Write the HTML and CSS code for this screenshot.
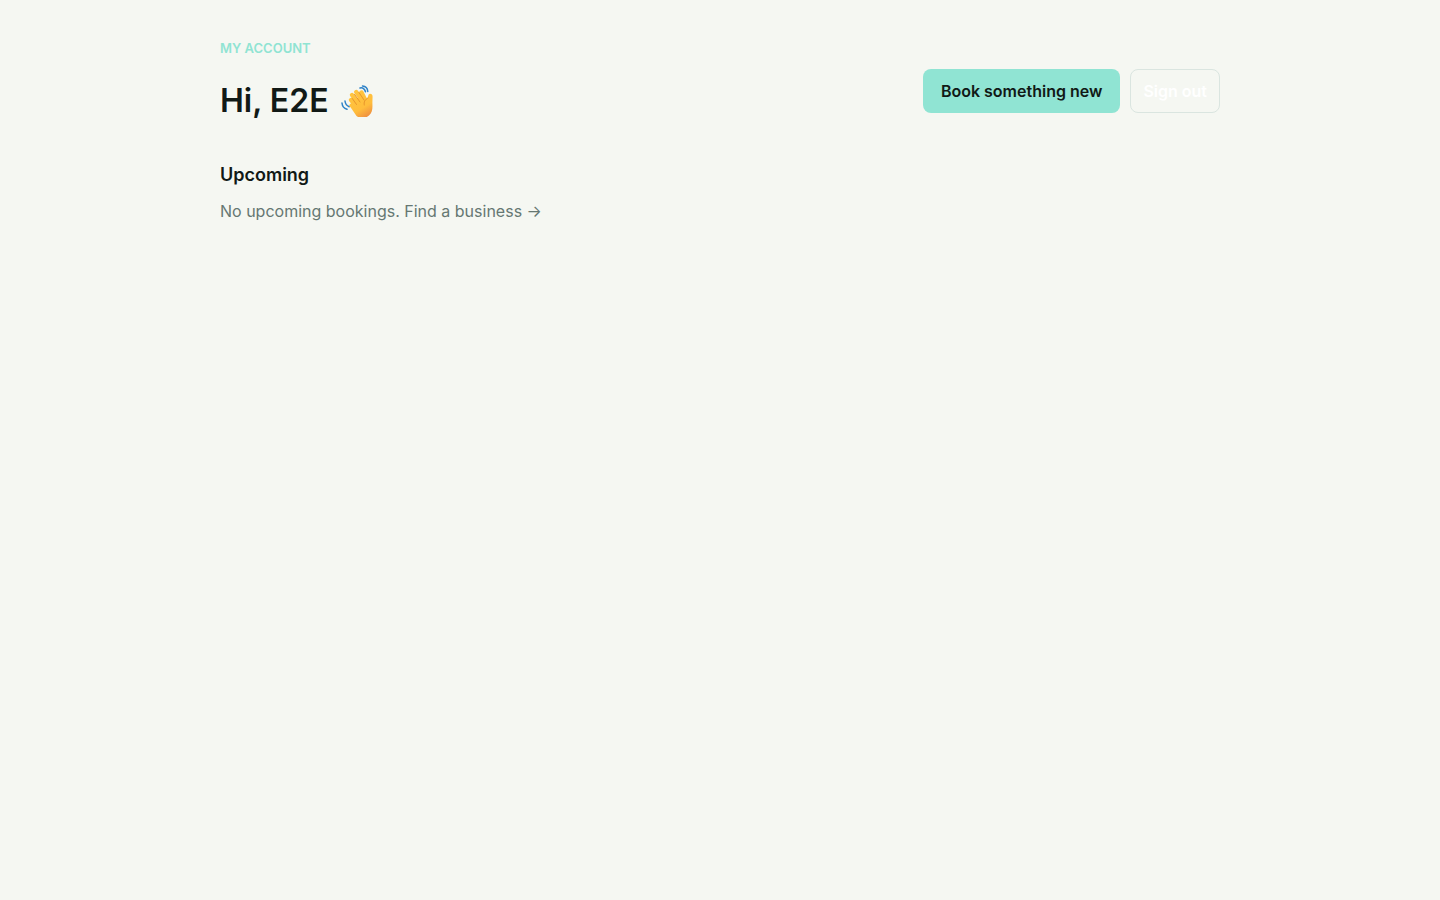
FILE: index.html
```html
<!DOCTYPE html>
<html lang="en">
<head>
    <meta charset="UTF-8">
    <meta name="viewport" content="width=device-width, initial-scale=1">
    <title>My account</title>
    <link rel="stylesheet" href="styles.css">
</head>
<body>
    <main class="container">
        <header class="account-header">
            <div>
                <p class="eyebrow">My account</p>
                <h1>
                    Hi, E2E
                    <svg class="wave" viewBox="0 0 32 32" role="img" aria-label="Waving hand">
                        <defs>
                            <linearGradient id="skin" gradientUnits="userSpaceOnUse" x1="10" y1="5" x2="26" y2="31">
                                <stop offset="0" stop-color="#ffc640"/>
                                <stop offset=".7" stop-color="#ffbd3c"/>
                                <stop offset="1" stop-color="#f09340"/>
                            </linearGradient>
                        </defs>
                        <g fill="none" stroke="#2f83c8" stroke-width="1.5" stroke-linecap="round">
                            <path d="M19 3c2.800-.8 4.800 1 5.500 3.800M21.500 1c3 .2 5 2.300 5.300 5.500M4 16c.3 2.800 1.800 4.800 4.200 5.800M1 18c.3 3.300 2.200 5.500 5 6.200"/>
                        </g>
                        <g fill="none" stroke="url(#skin)" stroke-width="4.400" stroke-linecap="round">
                            <path d="M10 15l7 9M11 10l8 10M15.200 7l8 11M20.500 7.500l4.500 9"/>
                        </g>
                        <path fill="url(#skin)" d="M12 16l10-7 3.500 6c1-1.300 1.500-3.700 2-5.200.7-1.700 3.800-1.200 4 1 .2 2.700-.2 5-.1 7.700.2 5.200.1 9-3.400 12-3.800 3.400-9 3.300-12.500.5C13 27.500 10.500 23.500 8 20.300z"/>
                        <path fill="none" stroke="#e8962c" stroke-width="1" stroke-linecap="round" d="M11.300 13.500l4.200 6M13.500 9.300l5.500 7.700M18 7.500l5 7.500M27 13c-3 1.500-4.500 4-3.700 7"/>
                    </svg>
                </h1>
            </div>
            <div class="actions">
                <a class="btn btn-primary" href="#">Book something new</a>
                <button class="btn btn-outline" type="button">Sign out</button>
            </div>
        </header>
        <section>
            <h2>Upcoming</h2>
            <p class="empty">No upcoming bookings. <a href="#">Find a business →</a></p>
        </section>
    </main>
</body>
</html>
```

FILE: styles.css
```css
* {
    box-sizing: border-box;
}
body {
    font-family: Inter, sans-serif;
    font-size: 16px;
    line-height: 24px;
    margin: 0;
    background: #f5f7f2;
    color: #111916;
}
.container {
    max-width: 1048px;
    margin: 0 auto;
    padding: 38px 24px;
}
.account-header {
    display: flex;
    flex-wrap: wrap;
    gap: 16px;
    justify-content: space-between;
    align-items: center;
    margin-bottom: 19px;
}
.eyebrow {
    margin: 0;
    font-size: 13px;
    line-height: 20px;
    font-weight: 600;
    text-transform: uppercase;
    color: #90e4d3;
}
h1 {
    display: flex;
    align-items: center;
    gap: 12px;
    margin: 23px 0;
    font-size: 32px;
    line-height: 40px;
    font-weight: 600;
}
.wave {
    width: 32px;
    height: 32px;
}
h2 {
    margin: 0 0 12px;
    font-size: 18px;
    font-weight: 600;
}
.actions {
    display: flex;
    gap: 10px;
}
.btn {
    height: 44px;
    border: 1px solid transparent;
    border-radius: 8px;
    font: inherit;
    font-weight: 600;
    line-height: 42px;
    text-decoration: none;
    cursor: pointer;
}
.btn-primary {
    padding: 0 17px;
    background: #90e4d3;
    color: #111916;
}
.btn-outline {
    padding: 0 12px;
    background: transparent;
    border-color: #dae5e0;
    color: #ffffff;
}
.empty {
    margin: 0;
    color: #667772;
}
.empty a {
    color: inherit;
    text-decoration: none;
}
```
